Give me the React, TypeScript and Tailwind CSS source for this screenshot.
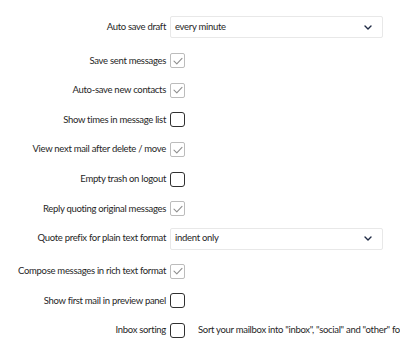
import React from 'react';

type Row =
  | { kind: 'select'; label: string; value: string }
  | { kind: 'check'; label: string; checked: boolean; note?: string };

const rows: Row[] = [
  { kind: 'select', label: 'Auto save draft', value: 'every minute' },
  { kind: 'check', label: 'Save sent messages', checked: true },
  { kind: 'check', label: 'Auto-save new contacts', checked: true },
  { kind: 'check', label: 'Show times in message list', checked: false },
  { kind: 'check', label: 'View next mail after delete / move', checked: true },
  { kind: 'check', label: 'Empty trash on logout', checked: false },
  { kind: 'check', label: 'Reply quoting original messages', checked: true },
  { kind: 'select', label: 'Quote prefix for plain text format', value: 'indent only' },
  { kind: 'check', label: 'Compose messages in rich text format', checked: true },
  { kind: 'check', label: 'Show first mail in preview panel', checked: false },
  {
    kind: 'check',
    label: 'Inbox sorting',
    checked: false,
    note: 'Sort your mailbox into "inbox", "social" and "other" folders',
  },
];

function Checkbox({ checked }: { checked: boolean }) {
  if (checked) {
    return (
      <span className="flex items-center justify-center w-[15px] h-[15px] rounded-[2px] border border-[#bcbcbc] bg-white">
        <svg width="10" height="8" viewBox="0 0 10 8" fill="none">
          <path d="M1 4.2 L3.8 6.8 L9 1.4" stroke="#8f8f8f" strokeWidth="1.1" strokeLinecap="round" strokeLinejoin="round" />
        </svg>
      </span>
    );
  }
  return <span className="block w-[15px] h-[15px] rounded-[3px] border-[1.5px] border-[#2f2f2f] bg-white" />;
}

function Select({ value }: { value: string }) {
  return (
    <div className="flex items-center justify-between w-[213px] h-[22px] border border-[#e8e8e8] rounded-[2px] bg-white pl-[4px] pr-[10px]">
      <span>{value}</span>
      <svg width="8" height="5" viewBox="0 0 8 5" fill="none">
        <path d="M1 1 L4 4 L7 1" stroke="#1f2a44" strokeWidth="1.4" strokeLinecap="round" strokeLinejoin="round" />
      </svg>
    </div>
  );
}

export default function App() {
  return (
    <div
      className="w-[400px] h-[345px] overflow-hidden bg-white pt-[12px] text-[9.5px] tracking-[-0.3px] text-[#262626]"
      style={{ fontFamily: 'Lato, "Open Sans", sans-serif' }}
    >
      {rows.map((row, i) => (
        <div
          key={i}
          className={`flex items-center ${row.kind === 'select' ? 'h-[30px]' : 'h-[29.6px]'} ${
            i === 0 ? 'mb-[4px]' : ''
          } ${i === 7 ? 'mb-[3px]' : ''}`}
        >
          <div className="w-[166px] shrink-0 text-right whitespace-nowrap">{row.label}</div>
          <div className="ml-[4px] flex items-center whitespace-nowrap">
            {row.kind === 'select' ? (
              <Select value={row.value} />
            ) : (
              <>
                <Checkbox checked={row.checked} />
                {row.note && <span className="ml-[13px]">{row.note}</span>}
              </>
            )}
          </div>
        </div>
      ))}
    </div>
  );
}
